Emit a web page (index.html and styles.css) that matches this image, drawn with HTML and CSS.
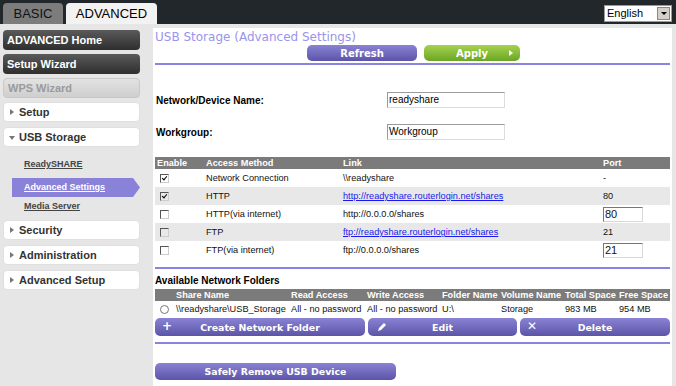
FILE: index.html
```html
<!DOCTYPE html>
<html lang="en">
<head>
  <meta charset="UTF-8">
  <title>USB Storage (Advanced Settings)</title>
  <link rel="stylesheet" href="styles.css">
</head>
<body>
  <div class="topbar">
    <div class="tabs">
      <div class="tab tab-basic">BASIC</div>
      <div class="tab tab-active">ADVANCED</div>
    </div>
    <div class="lang">
      <span class="lang-text">English</span>
      <span class="lang-btn"><span class="lang-arrow"></span></span>
    </div>
  </div>

  <div class="layout">
    <nav class="sidebar">
      <div class="nav-btn nav-dark">ADVANCED Home</div>
      <div class="nav-btn nav-dark">Setup Wizard</div>
      <div class="nav-btn nav-off">WPS Wizard</div>
      <div class="nav-btn nav-light"><span class="tri"></span>Setup</div>
      <div class="nav-btn nav-light"><span class="tri tri-down"></span>USB Storage</div>
      <div class="sub-list">
        <div class="sub-item">ReadySHARE</div>
        <div class="sub-item sub-active">Advanced Settings</div>
        <div class="sub-item">Media Server</div>
      </div>
      <div class="nav-btn nav-light"><span class="tri"></span>Security</div>
      <div class="nav-btn nav-light"><span class="tri"></span>Administration</div>
      <div class="nav-btn nav-light"><span class="tri"></span>Advanced Setup</div>
    </nav>

    <main class="content">
      <h1 class="page-title">USB Storage (Advanced Settings)</h1>
      <div class="action-row">
        <button class="btn btn-purple btn-refresh">Refresh</button>
        <button class="btn btn-green btn-apply">Apply<span class="apply-arrow"></span></button>
      </div>
      <div class="rule"></div>

      <div class="form-row first">
        <label class="form-label">Network/Device Name:</label>
        <div class="text-input">readyshare</div>
      </div>
      <div class="form-row">
        <label class="form-label">Workgroup:</label>
        <div class="text-input">Workgroup</div>
      </div>

      <table class="grid access">
        <tr class="head">
          <th class="c-enable">Enable</th>
          <th class="c-method">Access Method</th>
          <th class="c-link">Link</th>
          <th>Port</th>
        </tr>
        <tr>
          <td><span class="check on"></span></td>
          <td>Network Connection</td>
          <td>\\readyshare</td>
          <td>-</td>
        </tr>
        <tr class="shade">
          <td><span class="check on"></span></td>
          <td>HTTP</td>
          <td><a href="#">http://readyshare.routerlogin.net/shares</a></td>
          <td>80</td>
        </tr>
        <tr>
          <td><span class="check"></span></td>
          <td>HTTP(via internet)</td>
          <td>http://0.0.0.0/shares</td>
          <td><div class="port-input">80</div></td>
        </tr>
        <tr class="shade">
          <td><span class="check"></span></td>
          <td>FTP</td>
          <td><a href="#">ftp://readyshare.routerlogin.net/shares</a></td>
          <td>21</td>
        </tr>
        <tr>
          <td><span class="check"></span></td>
          <td>FTP(via internet)</td>
          <td>ftp://0.0.0.0/shares</td>
          <td><div class="port-input">21</div></td>
        </tr>
      </table>
      <div class="rule rule-mid"></div>

      <div class="section-title">Available Network Folders</div>
      <table class="grid folders">
        <tr class="head">
          <th class="f-radio"></th>
          <th class="f-share">Share Name</th>
          <th class="f-read">Read Access</th>
          <th class="f-write">Write Access</th>
          <th class="f-folder">Folder Name</th>
          <th class="f-vol">Volume Name</th>
          <th class="f-total">Total Space</th>
          <th>Free Space</th>
        </tr>
        <tr>
          <td><span class="radio"></span></td>
          <td>\\readyshare\USB_Storage</td>
          <td>All - no password</td>
          <td>All - no password</td>
          <td>U:\</td>
          <td>Storage</td>
          <td>983 MB</td>
          <td>954 MB</td>
        </tr>
      </table>
      <div class="folder-actions">
        <button class="btn btn-purple btn-create"><span class="btn-icon">+</span>Create Network Folder</button>
        <button class="btn btn-purple btn-edit">
          <svg class="btn-svg" width="10" height="10" viewBox="0 0 10 10"><path d="M1 9 L2 6 L7 1 L9 3 L4 8 Z" fill="#fff"/></svg>Edit</button>
        <button class="btn btn-purple btn-delete"><span class="btn-icon">&#x2715;</span>Delete</button>
      </div>
      <div class="rule rule-low"></div>

      <button class="btn btn-purple btn-remove">Safely Remove USB Device</button>
    </main>
  </div>
</body>
</html>
```

FILE: styles.css
```css
body {
  margin: 0;
  background-color: #e6e6e6;
  font-family: "Liberation Sans", Arial, sans-serif;
  font-size: 10px;
  color: #000;
  overflow: hidden;
}
.topbar {
  height: 24px;
  background-color: #22272b;
  display: flex;
  justify-content: space-between;
  align-items: flex-start;
}
.tabs {
  display: flex;
  align-items: flex-end;
  height: 24px;
  padding-left: 3px;
  gap: 3px;
}
.tab {
  height: 21px;
  line-height: 21px;
  font-size: 13px;
  text-align: center;
  border-radius: 4px 4px 0 0;
}
.tab-basic {
  width: 60px;
  background-color: #7c7c7c;
  color: #111;
}
.tab-active {
  width: 91px;
  background-color: #f2f2f2;
  color: #000;
}
.lang {
  margin: 5px 4px 0 0;
  width: 66px;
  height: 15px;
  background-color: #fff;
  border: 1px solid #9a9a9a;
  display: flex;
  justify-content: space-between;
}
.lang-text {
  font-size: 11px;
  line-height: 15px;
  padding-left: 2px;
}
.lang-btn {
  width: 13px;
  height: 13px;
  margin: 1px;
  background-color: #d4d0c8;
  border: 1px solid #888;
  box-sizing: border-box;
  display: flex;
  align-items: center;
  justify-content: center;
}
.lang-arrow {
  border-left: 3px solid transparent;
  border-right: 3px solid transparent;
  border-top: 3px solid #000;
}

.layout {
  display: flex;
  padding-top: 4px;
}
.sidebar {
  width: 137px;
  padding: 2px 0 0 3px;
  margin-right: 13px;
}
.nav-btn {
  height: 20px;
  line-height: 20px;
  margin-bottom: 4px;
  border-radius: 4px;
  padding-left: 4px;
  font-size: 11px;
  font-weight: bold;
  box-sizing: border-box;
}
.nav-dark {
  background: linear-gradient(#5a5a5a, #2e2e2e);
  color: #fff;
}
.nav-off {
  background: linear-gradient(#e2e2e2, #cfcfcf);
  color: #9a9a9a;
  border: 1px solid #c8c8c8;
  line-height: 18px;
}
.nav-light {
  background-color: #fff;
  color: #333;
  border: 1px solid #e0e0e0;
  line-height: 18px;
  margin-bottom: 5px;
}
.tri {
  display: inline-block;
  margin: 0 5px 1px 2px;
  border-top: 3px solid transparent;
  border-bottom: 3px solid transparent;
  border-left: 4px solid #777;
}
.tri-down {
  margin: 0 4px 1px 1px;
  border-left: 3px solid transparent;
  border-right: 3px solid transparent;
  border-top: 4px solid #777;
  border-bottom: 0;
}
.sub-list {
  margin: 8px 0 4px 0;
}
.sub-item {
  height: 19px;
  line-height: 19px;
  padding-left: 21px;
  font-size: 9px;
  font-weight: bold;
  color: #444;
  text-decoration: underline;
}
.sub-item:first-child {
  margin-bottom: 4px;
}
.sub-active {
  margin-left: 9px;
  padding-left: 12px;
  color: #fff;
  background-color: #8a82d8;
  clip-path: polygon(0 0, 121px 0, 128px 50%, 121px 100%, 0 100%);
}

.content {
  flex: 1;
  background-color: #fff;
  margin-right: 4px;
  height: 370px;
  padding: 0 2px;
}
.page-title {
  margin: 2px 0 0 0;
  font-family: "DejaVu Sans", Verdana, sans-serif;
  font-size: 12px;
  font-weight: normal;
  color: #9a94ec;
  height: 14px;
  line-height: 14px;
}
.action-row {
  display: flex;
  padding-left: 152px;
  gap: 7px;
  margin-top: 1px;
}
.btn {
  border: 0;
  border-radius: 5px;
  color: #fff;
  font-family: "DejaVu Sans", Verdana, sans-serif;
  font-size: 10px;
  font-weight: bold;
  padding: 0;
  height: 16px;
  display: flex;
  align-items: center;
  justify-content: center;
  position: relative;
}
.btn-purple {
  background: linear-gradient(#8a82d4, #5c54a8);
}
.btn-green {
  background: linear-gradient(#a6d250, #6aa624);
}
.btn-refresh {
  width: 110px;
}
.btn-apply {
  width: 96px;
}
.apply-arrow {
  position: absolute;
  right: 7px;
  top: 5px;
  border-top: 3px solid transparent;
  border-bottom: 3px solid transparent;
  border-left: 4px solid #fff;
}
.rule {
  height: 2px;
  background-color: #8a84e0;
  margin-top: 2px;
}

.form-row {
  display: flex;
  align-items: center;
  height: 16px;
  margin-top: 16px;
}
.form-row.first {
  margin-top: 27px;
}
.form-label {
  width: 231px;
  font-weight: bold;
  padding-left: 1px;
}
.text-input {
  width: 115px;
  height: 14px;
  border: 1px solid #9a9a9a;
  border-right-color: #dcdcdc;
  border-bottom-color: #dcdcdc;
  font-size: 10px;
  line-height: 14px;
  padding-left: 1px;
}

.grid {
  width: 100%;
  border-collapse: collapse;
  table-layout: fixed;
  font-size: 9.2px;
  white-space: nowrap;
}
.grid th,
.grid td {
  box-sizing: border-box;
  padding: 0 0 0 2px;
}
.grid th {
  background-color: #7b7b7b;
  color: #fff;
  text-align: left;
  font-weight: bold;
  height: 12px;
}
.grid td {
  height: 18px;
  color: #111;
}
.access {
  margin-top: 17px;
}
.access .shade td {
  background-color: #e8e8e8;
}
.c-enable {
  width: 49px;
}
.c-method {
  width: 137px;
}
.c-link {
  width: 260px;
}
.grid a {
  color: #1a1aee;
}
.check {
  display: inline-block;
  width: 7px;
  height: 7px;
  border: 1px solid #555;
  border-right-color: #ccc;
  border-bottom-color: #ccc;
  margin-left: 3px;
  position: relative;
  vertical-align: middle;
}
.check.on::after {
  content: "";
  position: absolute;
  left: 2px;
  top: 0;
  width: 2px;
  height: 4px;
  border: solid #000;
  border-width: 0 1px 1px 0;
  transform: rotate(40deg);
}
.port-input {
  width: 37px;
  height: 13px;
  border: 1px solid #777;
  border-right-color: #d8d8d8;
  border-bottom-color: #d8d8d8;
  font-size: 11px;
  line-height: 13px;
  padding-left: 1px;
}
.rule-mid {
  margin-top: 8px;
}
.section-title {
  font-weight: bold;
  margin-top: 6px;
  height: 12px;
  line-height: 12px;
}
.folders {
  margin-top: 2px;
}
.folders td {
  height: 16px;
}
.f-radio {
  width: 19px;
}
.f-share {
  width: 115px;
}
.f-read {
  width: 76px;
}
.f-write {
  width: 75px;
}
.f-folder {
  width: 59px;
}
.f-vol {
  width: 64px;
}
.f-total {
  width: 54px;
}
.radio {
  display: inline-block;
  width: 7px;
  height: 7px;
  border-radius: 50%;
  border: 1px solid #777;
  margin-left: 3px;
  vertical-align: middle;
}
.folder-actions {
  display: flex;
  gap: 3px;
  margin-top: 1px;
}
.folder-actions .btn {
  height: 18px;
  font-size: 9.4px;
}
.btn-create {
  width: 210px;
}
.btn-edit {
  width: 149px;
}
.btn-delete {
  flex: 1;
}
.btn-icon {
  position: absolute;
  left: 7px;
  top: 1px;
  font-size: 12px;
}
.btn-svg {
  position: absolute;
  left: 9px;
  top: 4px;
}
.rule-low {
  margin-top: 6px;
}
.btn-remove {
  width: 241px;
  height: 17px;
  margin-top: 19px;
  font-size: 9.4px;
}
```
